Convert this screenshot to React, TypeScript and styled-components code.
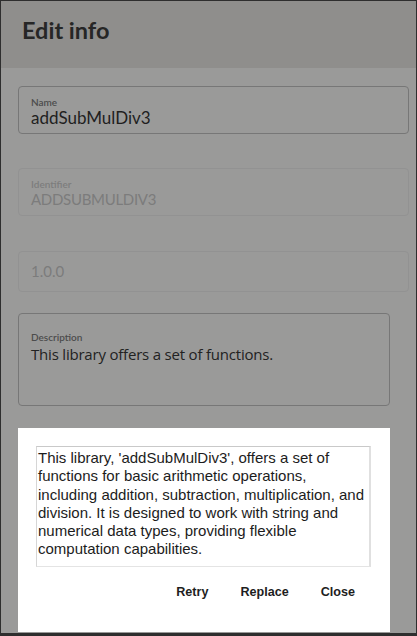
import * as React from "react";
import styled, { createGlobalStyle } from "styled-components";

const GlobalStyle = createGlobalStyle`
  html, body {
    margin: 0;
    padding: 0;
    background: #9a9a9a;
  }
  * {
    box-sizing: border-box;
  }
`;

const Frame = styled.div`
  position: relative;
  width: 417px;
  height: 636px;
  border: 1px solid #2e2e2e;
  border-bottom-width: 3px;
  background: #9a9a99;
  overflow: hidden;
  font-family: Lato, "Noto Sans", sans-serif;
`;

const Header = styled.div`
  height: 67px;
  background: #8f8e8c;
  display: flex;
  align-items: center;
  padding: 0 0 9px 21px;
`;

const Title = styled.h1`
  margin: 0;
  font-size: 23.5px;
  font-weight: 700;
  color: #262626;
`;

const Form = styled.div`
  display: flex;
  flex-direction: column;
  padding: 18px 7px 0 17px;
`;

type FieldKind = "input" | "plain" | "area";

const Field = styled.div<{ $kind: FieldKind; $muted?: boolean; $gap: number; $inset?: number }>`
  margin-top: ${(p) => p.$gap}px;
  margin-right: ${(p) => p.$inset || 0}px;
  height: ${(p) => (p.$kind === "area" ? 93 : p.$kind === "plain" ? 41 : 48)}px;
  border: 1px solid ${(p) => (p.$muted ? "#929292" : "#777777")};
  border-radius: 4px;
  padding: ${(p) => (p.$kind === "area" ? "17px" : p.$kind === "plain" ? "0" : "9px")} 12px 0 12px;
  display: flex;
  flex-direction: column;
  justify-content: ${(p) => (p.$kind === "plain" ? "center" : "flex-start")};
  color: ${(p) => (p.$muted ? "#7c7c7c" : "#1f1f1f")};
`;

const Label = styled.span<{ $muted?: boolean }>`
  font-size: 10px;
  line-height: 12px;
  font-weight: 600;
  color: ${(p) => (p.$muted ? "#7d7d7d" : "#4c4c4c")};
`;

const Value = styled.span<{ $size: number; $spacing?: number }>`
  font-size: ${(p) => p.$size}px;
  letter-spacing: ${(p) => p.$spacing || 0}px;
  line-height: 19px;
`;

const DescText = styled.span`
  margin-top: 2px;
  font-family: "Open Sans", sans-serif;
  font-size: 15px;
  line-height: 18px;
  letter-spacing: -0.2px;
  color: #222;
`;

const Dialog = styled.div`
  position: absolute;
  left: 17px;
  top: 427px;
  width: 372px;
  height: 204px;
  background: #ffffff;
  padding: 18px 19px 0 18px;
  display: flex;
  flex-direction: column;
  font-family: "Liberation Sans", Arial, sans-serif;
`;

const Suggestion = styled.div`
  height: 121px;
  border-top: 1px solid #c9c9c9;
  border-left: 1px solid #d6d6d6;
  border-right: 2px solid #e0e0e0;
  border-bottom: 1px solid #e4e4e4;
  padding: 2px 0 0 1px;
  font-size: 15px;
  line-height: 18.3px;
  white-space: nowrap;
  overflow: hidden;
  color: #1c1c1c;
`;

const Actions = styled.div`
  display: flex;
  justify-content: flex-end;
  gap: 32px;
  padding: 18px 16px 0 0;
`;

const ActionButton = styled.button`
  border: none;
  background: none;
  padding: 0;
  font-family: "Liberation Sans", Arial, sans-serif;
  font-size: 12.6px;
  font-weight: 700;
  color: #1e1e1e;
  cursor: pointer;
`;

const suggestionLines = [
  "This library, 'addSubMulDiv3', offers a set of",
  "functions for basic arithmetic operations,",
  "including addition, subtraction, multiplication, and",
  "division. It is designed to work with string and",
  "numerical data types, providing flexible",
  "computation capabilities.",
];

export default function App() {
  return (
    <>
      <GlobalStyle />
      <Frame>
        <Header>
          <Title>Edit info</Title>
        </Header>
        <Form>
          <Field $kind="input" $gap={0}>
            <Label>Name</Label>
            <Value $size={17}>addSubMulDiv3</Value>
          </Field>
          <Field $kind="input" $muted $gap={34}>
            <Label $muted>Identifier</Label>
            <Value $size={15} $spacing={-0.3}>ADDSUBMULDIV3</Value>
          </Field>
          <Field $kind="plain" $muted $gap={35}>
            <Value $size={15}>1.0.0</Value>
          </Field>
          <Field $kind="area" $gap={21} $inset={19}>
            <Label>Description</Label>
            <DescText>This library offers a set of functions.</DescText>
          </Field>
        </Form>
        <Dialog>
          <Suggestion>
            {suggestionLines.map((line, i) => (
              <div key={i}>{line}</div>
            ))}
          </Suggestion>
          <Actions>
            <ActionButton>Retry</ActionButton>
            <ActionButton>Replace</ActionButton>
            <ActionButton>Close</ActionButton>
          </Actions>
        </Dialog>
      </Frame>
    </>
  );
}
